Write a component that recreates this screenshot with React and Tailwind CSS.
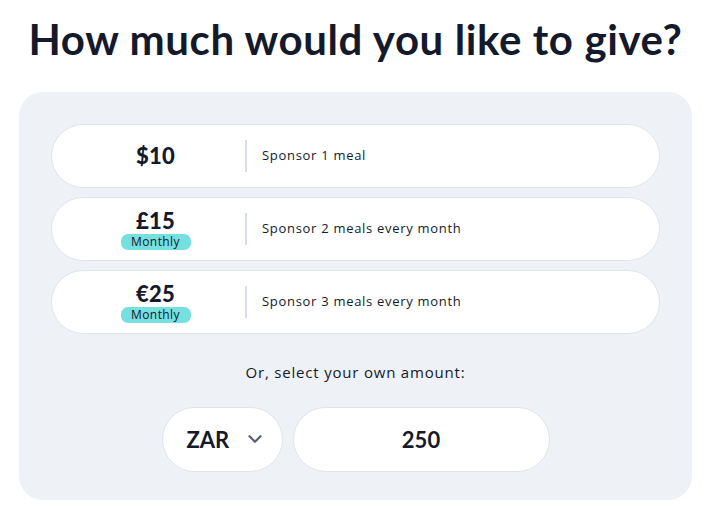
import React, { useState } from 'react';

const options = [
  { amount: '$10', text: 'Sponsor 1 meal', monthly: false },
  { amount: '£15', text: 'Sponsor 2 meals every month', monthly: true },
  { amount: '€25', text: 'Sponsor 3 meals every month', monthly: true },
];

const App = () => {
  const [amount, setAmount] = useState('250');

  return (
    <div className="w-[711px] h-[512px] bg-white font-['Open_Sans',sans-serif] text-[#141a2b]">
      <h1 className="text-center font-['Lato',sans-serif] font-bold text-[42px] leading-none pt-[18px] tracking-[0.6px]">
        How much would you like to give?
      </h1>

      <div className="mx-[19px] mt-[32px] bg-[#eef1f6] rounded-[24px] px-[32px] pt-[32px] pb-[28px]">
        <div className="flex flex-col gap-[9px]">
          {options.map((o) => (
            <button
              key={o.amount}
              className="flex items-center h-[64px] bg-white border border-[#dfe4ec] rounded-full text-left"
            >
              <div className="w-[193px] pl-[14px] flex flex-col items-center justify-center">
                <span className="font-['Lato',sans-serif] font-black text-[22px] leading-[24px] tracking-[0.3px]">{o.amount}</span>
                {o.monthly && (
                  <span className="mt-[1px] bg-[#76dfe0] rounded-[7px] w-[70px] text-center text-[12px] leading-[16px] tracking-[0.4px]">Monthly</span>
                )}
              </div>
              <div className="w-[2px] h-[32px] bg-[#d6dde8]" />
              <span className="ml-[15px] text-[13px] tracking-[0.7px]">{o.text}</span>
            </button>
          ))}
        </div>

        <p className="text-center text-[15px] tracking-[0.8px] mt-[27px]">Or, select your own amount:</p>

        <div className="flex justify-center gap-[10px] mt-[23px]">
          <div className="flex items-center justify-between w-[121px] h-[65px] bg-white border border-[#dfe4ec] rounded-full pl-[24px] pr-[16px]">
            <span className="font-['Lato',sans-serif] font-bold text-[22px]">ZAR</span>
            <svg width="22" height="22" viewBox="0 0 24 24" fill="none" stroke="#5b6273" strokeWidth="2.5" strokeLinecap="round" strokeLinejoin="round">
              <path d="M6 9l6 6 6-6" />
            </svg>
          </div>
          <input
            value={amount}
            onChange={(e) => setAmount(e.target.value)}
            className="w-[257px] h-[65px] bg-white border border-[#dfe4ec] rounded-full text-center font-['Lato',sans-serif] font-bold text-[22px] outline-none"
          />
        </div>
      </div>
    </div>
  );
};

export default App;
